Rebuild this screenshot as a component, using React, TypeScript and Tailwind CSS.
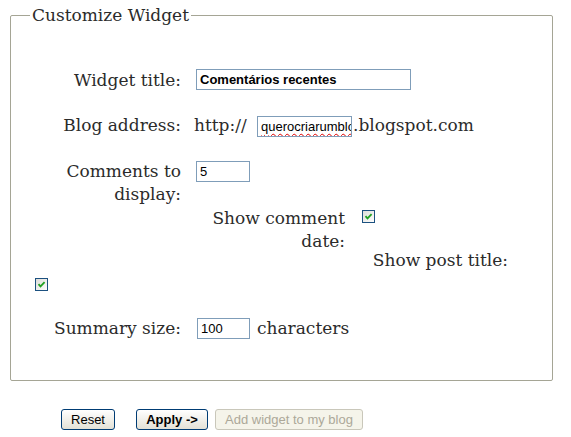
const serif = "font-['DejaVu_Serif',Georgia,serif]";

function FakeInput({
  value,
  width,
  bold = false,
  squiggle = false,
}: {
  value: string;
  width: string;
  bold?: boolean;
  squiggle?: boolean;
}) {
  return (
    <div
      className={`${width} h-[21px] overflow-hidden whitespace-nowrap border border-[#7f9db9] bg-white pl-[3px] font-['Liberation_Sans',Arial,sans-serif] text-[13px] leading-[19px] text-black ${
        bold ? "font-bold" : ""
      }`}
    >
      {squiggle ? (
        <span className="underline decoration-[#e00000] decoration-wavy decoration-1 underline-offset-2">
          {value}
        </span>
      ) : (
        value
      )}
    </div>
  );
}

function CheckBox() {
  return (
    <svg width="13" height="13" viewBox="0 0 13 13" className="block">
      <defs>
        <linearGradient id="cbg" x1="0" y1="0" x2="1" y2="1">
          <stop offset="0" stopColor="#dcdcd7" />
          <stop offset="1" stopColor="#ffffff" />
        </linearGradient>
      </defs>
      <rect x="0.5" y="0.5" width="12" height="12" fill="url(#cbg)" stroke="#1c5180" />
      <path d="M3.5 6.2 L5.5 8.4 L9.6 4.2" fill="none" stroke="#21a121" strokeWidth="1.8" />
    </svg>
  );
}

function XpButton({
  children,
  width,
  bold = false,
  disabled = false,
}: {
  children: React.ReactNode;
  width: string;
  bold?: boolean;
  disabled?: boolean;
}) {
  return (
    <div
      className={`${width} flex h-[21px] items-center justify-center rounded-[3px] border font-['Liberation_Sans',Arial,sans-serif] text-[13px] ${
        bold ? "font-bold" : ""
      } ${
        disabled
          ? "border-[#c9c7ba] bg-[#f5f4ea] text-[#aca899]"
          : "border-[#003c74] bg-gradient-to-b from-white to-[#e3e1d6] text-black"
      }`}
    >
      {children}
    </div>
  );
}

export default function App() {
  return (
    <div className={`h-[437px] w-[571px] bg-white pt-[4px] text-[17px] leading-[23px] text-[#2b2b2b] ${serif}`}>
      <fieldset className="ml-[10px] h-[377px] w-[543px] rounded-[2px] border border-[#a5a595]">
        <legend className="ml-[19px] px-[2px] text-[17px] leading-[22px]">Customize Widget</legend>

        <div className="mt-[43px] flex items-start">
          <div className="ml-[20px] w-[150px] text-right">Widget title:</div>
          <div className="ml-[15px]">
            <FakeInput value="Comentários recentes" width="w-[215px]" bold />
          </div>
        </div>

        <div className="mt-[22px] flex items-start">
          <div className="ml-[20px] w-[150px] text-right">Blog address:</div>
          <div className="ml-[13px] w-[63px]">http://</div>
          <div className="mt-[2px]">
            <FakeInput value="querocriarumblog" width="w-[95px]" squiggle />
          </div>
          <div className="ml-[1px]">.blogspot.com</div>
        </div>

        <div className="mt-[23px] flex items-start">
          <div className="ml-[20px] w-[150px] text-right">Comments to display:</div>
          <div className="ml-[15px] mt-[1px]">
            <FakeInput value="5" width="w-[54px]" />
          </div>
        </div>

        <div className="mt-[1px] flex items-start">
          <div className="ml-[184px] w-[150px] text-right">Show comment date:</div>
          <div className="ml-[17px] mt-[3px]">
            <CheckBox />
          </div>
        </div>

        <div className="-mt-[4px] flex items-start">
          <div className="ml-[347px] w-[150px] text-right">Show post title:</div>
        </div>

        <div className="mt-[6px] ml-[24px]">
          <CheckBox />
        </div>

        <div className="mt-[26px] flex items-start">
          <div className="ml-[20px] w-[150px] text-right">Summary size:</div>
          <div className="ml-[16px] mt-[1px]">
            <FakeInput value="100" width="w-[53px]" />
          </div>
          <div className="ml-[7px]">characters</div>
        </div>
      </fieldset>

      <div className="ml-[61px] mt-[28px] flex items-start">
        <XpButton width="w-[54px]">Reset</XpButton>
        <div className="ml-[21px]">
          <XpButton width="w-[72px]" bold>
            Apply -&gt;
          </XpButton>
        </div>
        <div className="ml-[7px]">
          <XpButton width="w-[148px]" disabled>
            Add widget to my blog
          </XpButton>
        </div>
      </div>
    </div>
  );
}
